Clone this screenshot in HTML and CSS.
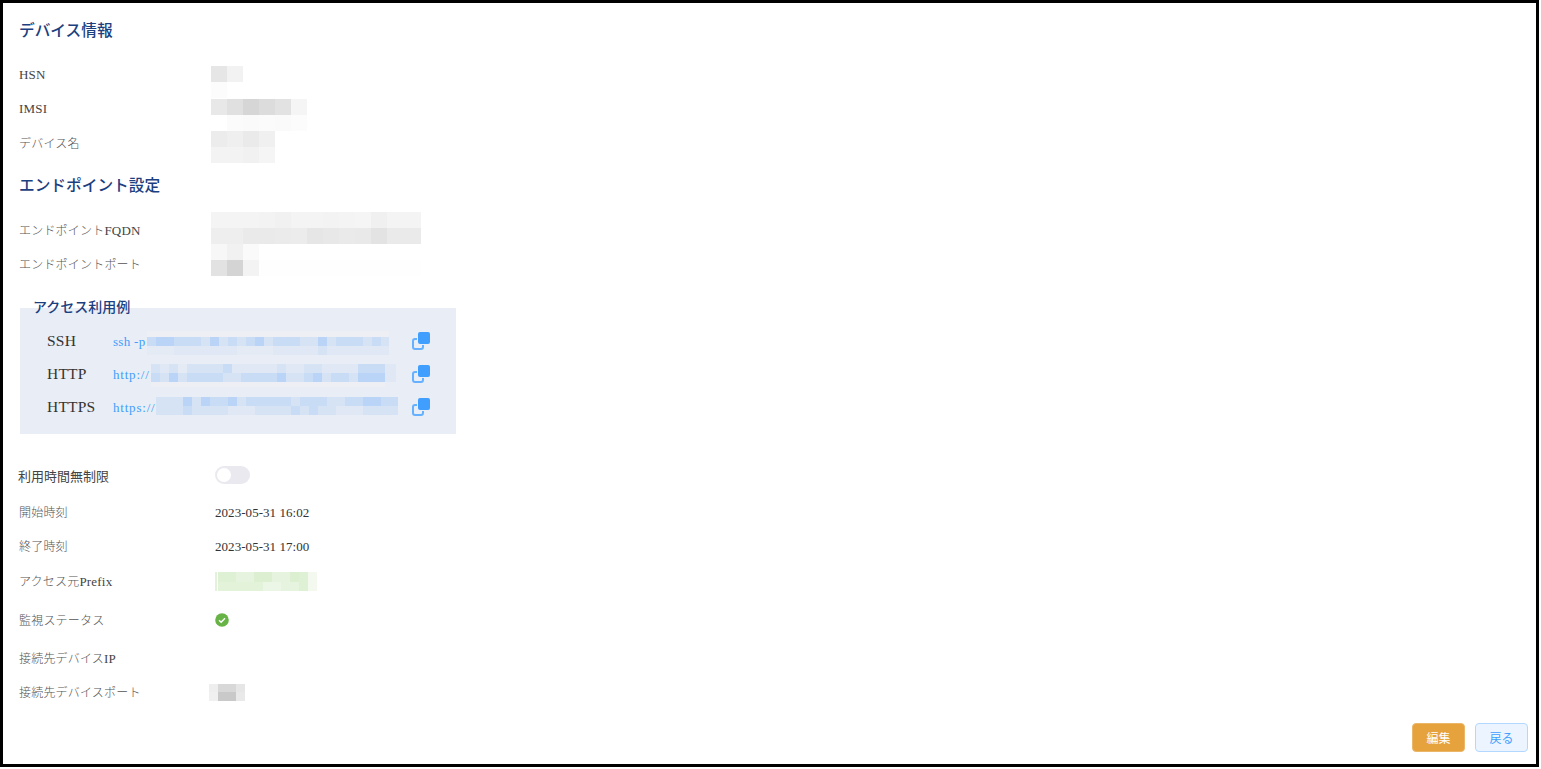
FILE: index.html
```html
<!DOCTYPE html>
<html lang="ja">
<head>
<meta charset="utf-8">
<title>デバイス情報</title>
<link rel="stylesheet" href="styles.css">
</head>
<body>
<main class="frame">
  <h2 class="title">デバイス情報</h2>
  <div class="row"><span class="label">HSN</span>
    <svg class="mos m-hsn" width="32" height="32"><rect width="16" height="16" fill="#e6e6e6"/><rect x="16" width="16" height="16" fill="#f2f2f2"/><rect y="16" width="16" height="16" fill="#fcfcfc"/></svg>
  </div>
  <div class="row"><span class="label">IMSI</span>
    <svg class="mos m-imsi" width="96" height="32"><rect width="16" height="16" fill="#e8e8e8"/><rect x="16" width="16" height="16" fill="#e0e0e0"/><rect x="32" width="16" height="16" fill="#d6d6d6"/><rect x="48" width="16" height="16" fill="#dcdcdc"/><rect x="64" width="16" height="16" fill="#e2e2e2"/><rect x="80" width="16" height="16" fill="#f5f5f5"/><rect x="16" y="16" width="16" height="16" fill="#fbfbfb"/><rect x="32" y="16" width="16" height="16" fill="#fafafa"/><rect x="48" y="16" width="16" height="16" fill="#fbfbfb"/><rect x="64" y="16" width="16" height="16" fill="#fafafa"/><rect x="80" y="16" width="16" height="16" fill="#fcfcfc"/></svg>
  </div>
  <div class="row"><span class="label jp">デバイス名</span>
    <svg class="mos m-name" width="64" height="32"><rect width="16" height="16" fill="#ececec"/><rect x="16" width="16" height="16" fill="#efefef"/><rect x="32" width="16" height="16" fill="#eaeaea"/><rect x="48" width="16" height="16" fill="#f0f0f0"/><rect y="16" width="32" height="16" fill="#f3f3f3"/><rect x="32" y="16" width="16" height="16" fill="#f1f1f1"/><rect x="48" y="16" width="16" height="16" fill="#f5f5f5"/></svg>
  </div>

  <h2 class="title title-second">エンドポイント設定</h2>
  <div class="row"><span class="label"><span class="jp">エンドポイント</span>FQDN</span>
    <svg class="mos m-fqdn" width="210" height="32"><rect width="48" height="16" fill="#f4f4f4"/><rect x="48" width="16" height="16" fill="#f3f3f3"/><rect x="64" width="16" height="16" fill="#f1f1f1"/><rect x="80" width="32" height="16" fill="#f4f4f4"/><rect x="112" width="16" height="16" fill="#f3f3f3"/><rect x="128" width="16" height="16" fill="#f4f4f4"/><rect x="144" width="16" height="16" fill="#f5f5f5"/><rect x="160" width="16" height="16" fill="#f0f0f0"/><rect x="176" width="34" height="16" fill="#f4f4f4"/><rect y="16" width="32" height="16" fill="#eeeeee"/><rect x="32" y="16" width="32" height="16" fill="#eaeaea"/><rect x="64" y="16" width="16" height="16" fill="#ebebeb"/><rect x="80" y="16" width="16" height="16" fill="#ececec"/><rect x="96" y="16" width="16" height="16" fill="#e6e6e6"/><rect x="112" y="16" width="16" height="16" fill="#e8e8e8"/><rect x="128" y="16" width="16" height="16" fill="#eaeaea"/><rect x="144" y="16" width="16" height="16" fill="#e9e9e9"/><rect x="160" y="16" width="16" height="16" fill="#e3e3e3"/><rect x="176" y="16" width="34" height="16" fill="#eaeaea"/></svg>
  </div>
  <div class="row"><span class="label jp">エンドポイントポート</span>
    <svg class="mos m-port" width="210" height="32"><rect width="16" height="16" fill="#f7f7f7"/><rect x="16" width="16" height="16" fill="#f1f1f1"/><rect x="32" width="16" height="16" fill="#fafafa"/><rect y="16" width="16" height="16" fill="#e2e2e2"/><rect x="16" y="16" width="16" height="16" fill="#d4d4d4"/><rect x="32" y="16" width="16" height="16" fill="#f3f3f3"/><rect x="48" y="16" width="162" height="16" fill="#fefefe"/></svg>
  </div>

  <section class="access">
    <h3 class="legend">アクセス利用例</h3>
    <div class="access-row">
      <span class="proto">SSH</span>
      <div class="cmd">
        <span class="cmd-text">ssh -p</span>
        <svg class="blur blur-ssh" width="242" height="24">
          <rect width="242" height="6" class="b6"/>
          <rect y="6" width="9" height="9" class="b2"/><rect x="9" y="6" width="18" height="9" class="b1"/><rect x="27" y="6" width="27" height="9" class="b2"/><rect x="54" y="6" width="9" height="9" class="b3"/><rect x="63" y="6" width="9" height="9" class="b1"/><rect x="72" y="6" width="9" height="9" class="b3"/><rect x="81" y="6" width="9" height="9" class="b2"/><rect x="90" y="6" width="9" height="9" class="b3"/><rect x="99" y="6" width="9" height="9" class="b2"/><rect x="108" y="6" width="9" height="9" class="b1"/><rect x="117" y="6" width="9" height="9" class="b3"/><rect x="126" y="6" width="27" height="9" class="b2"/><rect x="153" y="6" width="18" height="9" class="b3"/><rect x="171" y="6" width="9" height="9" class="b1"/><rect x="180" y="6" width="9" height="9" class="b3"/><rect x="189" y="6" width="27" height="9" class="b2"/><rect x="216" y="6" width="9" height="9" class="b3"/><rect x="225" y="6" width="9" height="9" class="b2"/><rect x="234" y="6" width="8" height="9" class="b3"/>
          <rect y="15" width="242" height="9" class="b5"/><rect x="27" y="15" width="63" height="9" class="b4"/><rect x="126" y="15" width="45" height="9" class="b4"/><rect x="171" y="15" width="9" height="9" class="b3"/><rect x="180" y="15" width="62" height="9" class="b4"/>
        </svg>
      </div>
      <svg class="copy" width="18" height="18" viewBox="0 0 18 18"><path d="M5 7H3a2 2 0 0 0-2 2v6a2 2 0 0 0 2 2h6a2 2 0 0 0 2-2v-2" class="copy-back"/><rect x="6" width="12" height="12" rx="2" class="copy-front"/></svg>
    </div>
    <div class="access-row">
      <span class="proto">HTTP</span>
      <div class="cmd">
        <span class="cmd-text cmd-url">http://</span>
        <svg class="blur blur-http" width="245" height="24">
          <rect width="9" height="9" class="b3"/><rect x="9" width="9" height="9" class="b4"/><rect x="18" width="9" height="9" class="b3"/><rect x="27" width="9" height="9" class="b5"/><rect x="36" width="36" height="9" class="b3"/><rect x="72" width="9" height="9" class="b2"/><rect x="81" width="45" height="9" class="b4"/><rect x="126" width="9" height="9" class="b3"/><rect x="135" width="18" height="9" class="b4"/><rect x="153" width="18" height="9" class="b3"/><rect x="171" width="36" height="9" class="b4"/><rect x="207" width="27" height="9" class="b2"/><rect x="234" width="11" height="9" class="b4"/>
          <rect y="9" width="9" height="9" class="b2"/><rect x="9" y="9" width="9" height="9" class="b3"/><rect x="18" y="9" width="9" height="9" class="b1"/><rect x="27" y="9" width="9" height="9" class="b3"/><rect x="36" y="9" width="36" height="9" class="b2"/><rect x="72" y="9" width="18" height="9" class="b3"/><rect x="90" y="9" width="36" height="9" class="b2"/><rect x="126" y="9" width="9" height="9" class="b1"/><rect x="135" y="9" width="18" height="9" class="b3"/><rect x="153" y="9" width="9" height="9" class="b2"/><rect x="162" y="9" width="9" height="9" class="b1"/><rect x="171" y="9" width="9" height="9" class="b3"/><rect x="180" y="9" width="18" height="9" class="b2"/><rect x="198" y="9" width="9" height="9" class="b3"/><rect x="207" y="9" width="27" height="9" class="b1"/><rect x="234" y="9" width="11" height="9" class="b4"/>
          <rect y="18" width="234" height="5" class="b6"/>
        </svg>
      </div>
      <svg class="copy" width="18" height="18" viewBox="0 0 18 18"><path d="M5 7H3a2 2 0 0 0-2 2v6a2 2 0 0 0 2 2h6a2 2 0 0 0 2-2v-2" class="copy-back"/><rect x="6" width="12" height="12" rx="2" class="copy-front"/></svg>
    </div>
    <div class="access-row">
      <span class="proto">HTTPS</span>
      <div class="cmd">
        <span class="cmd-text cmd-url">https://</span>
        <svg class="blur blur-https" width="242" height="24">
          <rect width="27" height="9" class="b3"/><rect x="27" width="9" height="9" class="b1"/><rect x="36" width="9" height="9" class="b3"/><rect x="45" width="9" height="9" class="b1"/><rect x="54" width="18" height="9" class="b2"/><rect x="72" width="9" height="9" class="b1"/><rect x="81" width="9" height="9" class="b3"/><rect x="90" width="45" height="9" class="b2"/><rect x="135" width="9" height="9" class="b3"/><rect x="144" width="27" height="9" class="b2"/><rect x="171" width="18" height="9" class="b3"/><rect x="189" width="18" height="9" class="b2"/><rect x="207" width="18" height="9" class="b1"/><rect x="225" width="17" height="9" class="b2"/>
          <rect y="9" width="242" height="9" class="b3"/><rect x="27" y="9" width="9" height="9" class="b2"/><rect x="72" y="9" width="27" height="9" class="b4"/><rect x="135" y="9" width="9" height="9" class="b2"/><rect x="153" y="9" width="9" height="9" class="b2"/><rect x="180" y="9" width="27" height="9" class="b4"/>
        </svg>
      </div>
      <svg class="copy" width="18" height="18" viewBox="0 0 18 18"><path d="M5 7H3a2 2 0 0 0-2 2v6a2 2 0 0 0 2 2h6a2 2 0 0 0 2-2v-2" class="copy-back"/><rect x="6" width="12" height="12" rx="2" class="copy-front"/></svg>
    </div>
  </section>

  <div class="row row-switch">
    <span class="label label-sans">利用時間無制限</span>
    <span class="switch"><span class="knob"></span></span>
  </div>
  <div class="row row-after-switch"><span class="label jp">開始時刻</span><span class="value">2023-05-31 16:02</span></div>
  <div class="row"><span class="label jp">終了時刻</span><span class="value">2023-05-31 17:00</span></div>
  <div class="row row-gap1"><span class="label"><span class="jp">アクセス元</span>Prefix</span>
    <svg class="mos m-prefix" width="102" height="19">
      <rect width="2" height="19" fill="#e3f2da"/><rect x="3" width="90" height="19" fill="#e6f4df"/><rect x="3" width="18" height="10" fill="#dff1d5"/><rect x="39" width="18" height="10" fill="#dcefd1"/><rect x="75" width="18" height="10" fill="#dcefd1"/><rect x="3" y="10" width="45" height="9" fill="#e3f3da"/><rect x="48" y="10" width="18" height="9" fill="#ecf6e6"/><rect x="84" width="9" height="19" fill="#dff1d5"/><rect x="93" width="9" height="19" fill="#f3f9ef"/>
    </svg>
  </div>
  <div class="row row-gap5"><span class="label jp">監視ステータス</span>
    <span class="status-cell"><svg class="status" width="14" height="14" viewBox="0 0 14 14"><circle cx="7" cy="7" r="6.8" class="status-bg"/><path d="M4 7.2l2.1 2L10 5.2" class="status-mark"/></svg></span>
  </div>
  <div class="row row-gap4"><span class="label"><span class="jp">接続先デバイス</span>IP</span></div>
  <div class="row"><span class="label jp">接続先デバイスポート</span>
    <svg class="mos m-dport" width="36" height="17"><rect width="9" height="8" fill="#eeeeee"/><rect x="9" width="18" height="8" fill="#d8d8d8"/><rect x="27" width="9" height="8" fill="#e6e6e6"/><rect y="8" width="9" height="9" fill="#f0f0f0"/><rect x="9" y="8" width="18" height="9" fill="#c9c9c9"/><rect x="27" y="8" width="9" height="9" fill="#e9e9e9"/></svg>
  </div>

  <footer class="actions">
    <button class="btn btn-edit" type="button">編集</button>
    <button class="btn btn-back" type="button">戻る</button>
  </footer>
</main>
</body>
</html>
```
FILE: styles.css
```css
* { box-sizing: border-box; }
html, body { margin: 0; padding: 0; background: #fff; }
body { width: 1541px; height: 769px; overflow: hidden; font-family: "Liberation Serif", "Noto Sans CJK JP", serif; }

.frame {
  width: 1539px;
  height: 767px;
  border: 3px solid #000;
  padding: 0 8px 12px 16px;
  display: flex;
  flex-direction: column;
  background: #fff;
}

.title {
  margin: 16px 0 15px;
  height: 24px;
  line-height: 24px;
  font-size: 15.7px;
  font-weight: 500;
  color: #1c3f80;
}
.title-second { margin-top: 14px; }

.row {
  display: flex;
  align-items: center;
  height: 34px;
  flex: none;
}
.label {
  width: 192px;
  flex: none;
  font-size: 13px;
  letter-spacing: 0.2px;
  color: #444;
}
.jp {
  font-size: 12px;
  font-weight: 300;
  letter-spacing: 0.2px;
  color: #555;
}
.label-sans {
  margin: -3px 0 0 -1px;
  width: 193px;
  letter-spacing: 0;
  font-family: "Noto Sans CJK JP", sans-serif;
  color: #444;
}
.value {
  margin: 2px 0 0 4px;
  font-size: 13px;
  letter-spacing: 0.05px;
  color: #333;
}
.status-cell { margin-left: 4px; display: flex; }

.mos { flex: none; display: block; shape-rendering: crispEdges; }
.m-hsn { align-self: flex-start; margin-top: 8px; }
.m-imsi { align-self: flex-start; margin-top: 7px; }
.m-name { align-self: flex-start; margin-top: 5px; }
.m-fqdn { align-self: flex-start; margin-top: -1px; }
.m-port { align-self: flex-start; margin-top: -3px; }
.m-prefix { margin-left: 4px; }
.m-dport { margin-left: -2px; }

.access {
  position: relative;
  width: 436px;
  height: 126px;
  margin: 27px 0 0 1px;
  padding: 17px 26px 0 27px;
  background: #e9edf5;
  flex: none;
}
.legend {
  position: absolute;
  left: 13px;
  top: -10px;
  margin: 0;
  height: 20px;
  line-height: 20px;
  font-size: 14px;
  font-weight: 500;
  color: #1c3f80;
}
.access-row {
  display: flex;
  align-items: center;
  height: 33px;
}
.proto {
  width: 66px;
  flex: none;
  margin-top: -2px;
  font-size: 15.5px;
  letter-spacing: 0.2px;
  color: #333;
}
.cmd {
  width: 299px;
  flex: none;
  display: flex;
  align-items: center;
}
.cmd-text {
  font-size: 13px;
  letter-spacing: 0.3px;
  color: #409eff;
  white-space: pre;
}
.cmd-url { letter-spacing: 0.8px; }
.blur { flex: none; display: block; margin-top: 3px; shape-rendering: crispEdges; }
.blur-ssh { margin-left: 1px; }
.blur-http { margin-left: 1px; }
.blur-https { margin-left: 0; }
.b1 { fill: #b9d4f6; }
.b2 { fill: #c8dcf5; }
.b3 { fill: #d6e3f5; }
.b4 { fill: #e0e8f5; }
.b5 { fill: #e5ebf5; }
.b6 { fill: #edeff5; }

.copy { flex: none; display: block; margin-top: -1px; }
.copy-back { fill: none; stroke: #66b1ff; stroke-width: 2; }
.copy-front { fill: #409eff; }

.row-switch { margin-top: 26px; }
.row-after-switch, .row-gap1 { margin-top: 1px; }
.row-gap4 { margin-top: 4px; }
.row-gap5 { margin-top: 5px; }

.switch {
  margin: -4px 0 0 4px;
  width: 35px;
  height: 18px;
  border-radius: 9px;
  background: #e9e9ef;
  display: flex;
  align-items: center;
  padding-left: 2px;
}
.knob {
  width: 14px;
  height: 14px;
  border-radius: 50%;
  background: #fff;
}

.status { display: block; }
.status-bg { fill: #67b346; }
.status-mark { fill: none; stroke: #fff; stroke-width: 1.4; }

.actions {
  margin-top: auto;
  display: flex;
  justify-content: flex-end;
  gap: 10px;
}
.btn {
  width: 53px;
  height: 29px;
  padding: 0;
  border-radius: 4px;
  font-family: "Noto Sans CJK JP", sans-serif;
  font-size: 12px;
  border: 1px solid;
}
.btn-edit { background: #e6a23c; border-color: #ecb668; color: #fff; }
.btn-back { background: #ecf5ff; border-color: #b3d8ff; color: #409eff; }
```
